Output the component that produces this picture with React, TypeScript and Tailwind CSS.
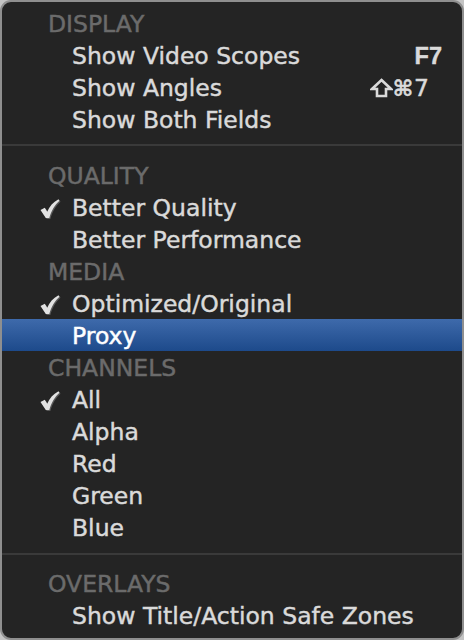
import React from "react";

type Item = { label: string; checked?: boolean; selected?: boolean; shortcut?: "f7" | "sc7" };

const Header = ({ children }: { children: React.ReactNode }) => (
  <div className="h-8 flex items-center pt-[4px] pl-[46px] text-[#6b6b6b]">{children}</div>
);

const Check = () => (
  <svg width="20" height="20" viewBox="0 0 20 20" className="drop-shadow-[1px_1px_0_#5a5a5a]">
    <path d="M0.5 11 L4.8 8.8 L7.2 12.8 C9.5 7.5 13 3.2 18.5 0.3 L19.5 1.8 C14.5 6.5 11.5 11.5 9.3 19 L5.8 19 Z" fill="#e2e2e2" />
  </svg>
);

const Shift = () => (
  <svg width="23" height="20" viewBox="0 0 23 20">
    <path d="M11.5 2 L21 11 L16 11 L16 18 L7 18 L7 11 L2 11 Z" fill="none" stroke="#dadada" strokeWidth="2.6" strokeLinejoin="miter" />
  </svg>
);

const Row = ({ item }: { item: Item }) => (
  <div
    className={
      "relative h-8 flex items-center " +
      (item.selected ? "bg-gradient-to-b from-[#3e6aab] to-[#1d4a8b] text-white" : "text-[#dadada]")
    }
  >
    <div className="w-[70px] shrink-0 flex justify-start pl-[38px] pt-[3px]">
      {item.checked ? <Check /> : null}
    </div>
    <div className="flex-1 pt-[4px]">{item.label}</div>
    {item.shortcut === "f7" ? (
      <div
        className="absolute right-[20px] top-0 h-8 pt-[4px] flex items-center font-bold"
        style={{ fontFamily: '"Liberation Sans", sans-serif' }}
      >
        F7
      </div>
    ) : null}
    {item.shortcut === "sc7" ? (
      <div className="absolute right-[33px] top-0 h-8 pt-[4px] flex items-center">
        <span className="-mt-[2px]"><Shift /></span>
        <span className="text-[22px] font-bold">⌘</span>
        <span className="pl-[1px]">7</span>
      </div>
    ) : null}
  </div>
);

const Sep = () => <div className="h-[2px] bg-[#3a3a3a]" />;

export default function App() {
  return (
    <div className="w-[464px] h-[640px] bg-[#c4c4c4] overflow-hidden">
      <div
        className="w-[464px] h-[640px] rounded-[11px] border-2 border-[#8f8f8f] bg-[#242424] overflow-hidden text-[23.5px] leading-none [-webkit-text-stroke:0.45px_currentColor]"
        style={{ fontFamily: '"DejaVu Sans", "Liberation Sans", sans-serif' }}
      >
        <div className="pt-[5px]">
          <Header>DISPLAY</Header>
          <Row item={{ label: "Show Video Scopes", shortcut: "f7" }} />
          <Row item={{ label: "Show Angles", shortcut: "sc7" }} />
          <Row item={{ label: "Show Both Fields" }} />
        </div>
        <div className="h-[9px]" />
        <Sep />
        <div className="pt-[13px]">
          <Header>QUALITY</Header>
          <Row item={{ label: "Better Quality", checked: true }} />
          <Row item={{ label: "Better Performance" }} />
          <Header>MEDIA</Header>
          <Row item={{ label: "Optimized/Original", checked: true }} />
          <Row item={{ label: "Proxy", selected: true }} />
          <Header>CHANNELS</Header>
          <Row item={{ label: "All", checked: true }} />
          <Row item={{ label: "Alpha" }} />
          <Row item={{ label: "Red" }} />
          <Row item={{ label: "Green" }} />
          <Row item={{ label: "Blue" }} />
        </div>
        <div className="h-[10px]" />
        <Sep />
        <div className="pt-[12px]">
          <Header>OVERLAYS</Header>
          <Row item={{ label: "Show Title/Action Safe Zones" }} />
        </div>
      </div>
    </div>
  );
}
